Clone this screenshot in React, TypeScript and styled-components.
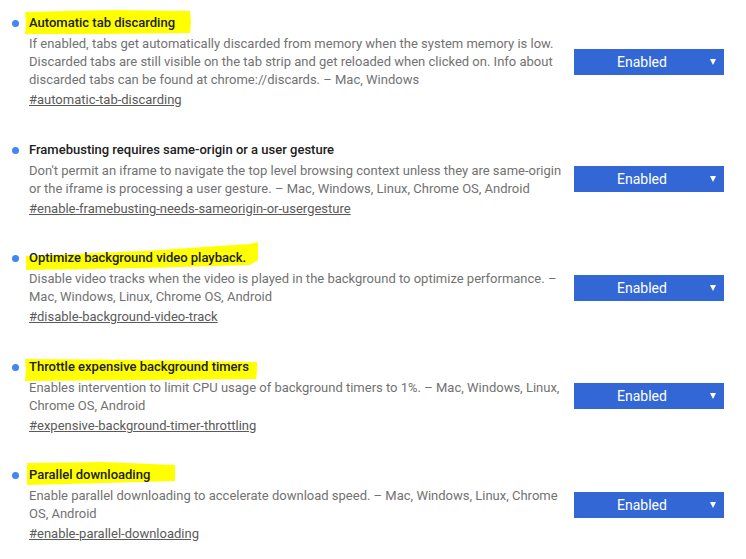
import styled, { createGlobalStyle } from "styled-components";

type Flag = {
  title: string;
  desc: string;
  link: string;
  marker?: { w: number; h: number; points: string };
};

const flags: Flag[] = [
  {
    title: "Automatic tab discarding",
    desc:
      "If enabled, tabs get automatically discarded from memory when the system memory is low. Discarded tabs are still visible on the tab strip and get reloaded when clicked on. Info about discarded tabs can be found at chrome://discards. \u2013 Mac, Windows",
    link: "#automatic-tab-discarding",
    marker: { w: 170, h: 30, points: "1,5 90,3 166,4 167,15 166,26 80,27 1,27 2,16" },
  },
  {
    title: "Framebusting requires same-origin or a user gesture",
    desc:
      "Don't permit an iframe to navigate the top level browsing context unless they are same-origin or the iframe is processing a user gesture. \u2013 Mac, Windows, Linux, Chrome OS, Android",
    link: "#enable-framebusting-needs-sameorigin-or-usergesture",
  },
  {
    title: "Optimize background video playback.",
    desc:
      "Disable video tracks when the video is played in the background to optimize performance. \u2013 Mac, Windows, Linux, Chrome OS, Android",
    link: "#disable-background-video-track",
    marker: { w: 240, h: 40, points: "2,14 120,9 225,2 234,0 234,18 226,23 120,26 2,28 2,20" },
  },
  {
    title: "Throttle expensive background timers",
    desc:
      "Enables intervention to limit CPU usage of background timers to 1%. \u2013 Mac, Windows, Linux, Chrome OS, Android",
    link: "#expensive-background-timer-throttling",
    marker: { w: 240, h: 36, points: "1,8 120,9 233,11 233,20 232,28 120,29 1,30 2,18" },
  },
  {
    title: "Parallel downloading",
    desc:
      "Enable parallel downloading to accelerate download speed. \u2013 Mac, Windows, Linux, Chrome OS, Android",
    link: "#enable-parallel-downloading",
    marker: { w: 156, h: 32, points: "3,4 80,3 151,6 151,16 151,22 80,24 3,26 3,15" },
  },
];

const GlobalStyle = createGlobalStyle`
  html, body {
    margin: 0;
    padding: 0;
    background: #ffffff;
  }
  body {
    font-family: Roboto, "Liberation Sans", sans-serif;
  }
`;

const Page = styled.div`
  display: flex;
  flex-direction: column;
  gap: 29.5px;
  padding: 13px 22px 0 12px;
`;

const Item = styled.div`
  display: flex;
  align-items: center;
  justify-content: space-between;
`;

const Body = styled.div`
  display: flex;
  align-items: flex-start;
  gap: 10px;
  width: 552px;
`;

const Bullet = styled.span`
  flex: none;
  width: 7px;
  height: 7px;
  margin-top: 7px;
  border-radius: 50%;
  background: #4285f4;
`;

const Text = styled.div`
  display: flex;
  flex-direction: column;
  min-width: 0;
`;

const Title = styled.div`
  position: relative;
  z-index: 0;
  align-self: flex-start;
  font-size: 13px;
  font-weight: 500;
  line-height: 20px;
  color: #202020;
`;

const Marker = styled.svg`
  position: absolute;
  left: -5px;
  top: -6px;
  z-index: -1;
  overflow: visible;
`;

const Desc = styled.p`
  margin: 2px 0 0;
  font-size: 13px;
  line-height: 18px;
  color: #727272;
  width: 536px;
`;

const Link = styled.a`
  margin-top: 1px;
  font-size: 13px;
  line-height: 20px;
  color: #5a5a5a;
  text-decoration: underline;
  align-self: flex-start;
`;

const Select = styled.div`
  flex: none;
  display: flex;
  align-items: center;
  width: 150px;
  height: 26px;
  background: #3367d6;
  color: #ffffff;
  font-size: 14px;
`;

const Label = styled.span`
  flex: 1;
  text-align: center;
`;

const Arrow = styled.span`
  width: 0;
  height: 0;
  margin-right: 8px;
  border-left: 3.5px solid transparent;
  border-right: 3.5px solid transparent;
  border-top: 6px solid #ffffff;
`;

export default function App() {
  return (
    <>
      <GlobalStyle />
      <Page>
        {flags.map((f) => (
          <Item key={f.link}>
            <Body>
              <Bullet />
              <Text>
                <Title>
                  {f.marker && (
                    <Marker width={f.marker.w} height={f.marker.h}>
                      <polygon points={f.marker.points} fill="#ffff00" />
                    </Marker>
                  )}
                  {f.title}
                </Title>
                <Desc>{f.desc}</Desc>
                <Link href={f.link}>{f.link}</Link>
              </Text>
            </Body>
            <Select>
              <Label>Enabled</Label>
              <Arrow />
            </Select>
          </Item>
        ))}
      </Page>
    </>
  );
}
